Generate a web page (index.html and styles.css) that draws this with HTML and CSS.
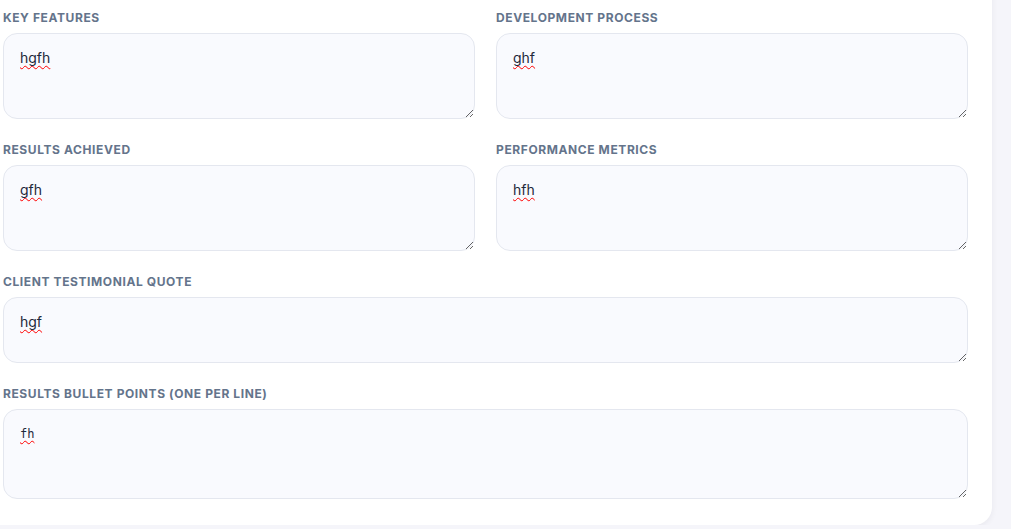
FILE: index.html
```html
<!DOCTYPE html>
<html lang="en">
<head>
  <meta charset="UTF-8" />
  <meta name="viewport" content="width=device-width, initial-scale=1.0" />
  <title>Case Study Details</title>
  <link rel="stylesheet" href="styles.css">
</head>
<body>
  <div class="card">
    <div class="form-row two">
      <div class="field">
        <label for="features">Key Features</label>
        <textarea id="features" class="box">hgfh</textarea>
      </div>
      <div class="field">
        <label for="process">Development Process</label>
        <textarea id="process" class="box">ghf</textarea>
      </div>
    </div>

    <div class="form-row two">
      <div class="field">
        <label for="results">Results Achieved</label>
        <textarea id="results" class="box">gfh</textarea>
      </div>
      <div class="field">
        <label for="metrics">Performance Metrics</label>
        <textarea id="metrics" class="box">hfh</textarea>
      </div>
    </div>

    <div class="form-row">
      <div class="field">
        <label for="quote">Client Testimonial Quote</label>
        <textarea id="quote" class="box short">hgf</textarea>
      </div>
    </div>

    <div class="form-row">
      <div class="field">
        <label for="bullets">Results Bullet Points (One Per Line)</label>
        <textarea id="bullets" class="box tall mono">fh</textarea>
      </div>
    </div>
  </div>
</body>
</html>
```

FILE: styles.css
```css
body {
  margin: 0;
  background: #f5f5fa;
  font-family: 'Inter', 'Liberation Sans', sans-serif;
  color: #1e293b;
  overflow: hidden;
}

.card {
  width: 965px;
  margin-left: -21px;
  margin-top: -14px;
  padding: 24px 24px 26px;
  background: #ffffff;
  border-radius: 0 0 18px 18px;
  box-shadow: 0 2px 6px rgba(30, 41, 59, 0.06);
}

.form-row {
  margin-bottom: 23px;
}

.form-row:last-child {
  margin-bottom: 0;
}

.form-row.two {
  display: grid;
  grid-template-columns: 1fr 1fr;
  gap: 21px;
}

.field label {
  display: block;
  font-size: 12px;
  font-weight: 700;
  line-height: 16px;
  letter-spacing: 0.05em;
  text-transform: uppercase;
  color: #64748b;
  margin-bottom: 7px;
}

.box {
  display: block;
  box-sizing: border-box;
  width: 100%;
  height: 86px;
  padding: 14px 16px;
  border: 1px solid #e4e7ef;
  border-radius: 14px;
  background: #f9fafe;
  font-family: 'Inter', 'Liberation Sans', sans-serif;
  font-size: 14px;
  line-height: 20px;
  color: #1e293b;
  text-decoration: underline wavy #ff0000;
  text-decoration-thickness: 1px;
  text-decoration-skip-ink: none;
  text-underline-offset: 2px;
  outline: none;
}

.box.short {
  height: 66px;
}

.box.tall {
  height: 90px;
}

.box.mono {
  font-family: 'DejaVu Sans Mono', 'Liberation Mono', monospace;
  font-size: 12px;
}
```
